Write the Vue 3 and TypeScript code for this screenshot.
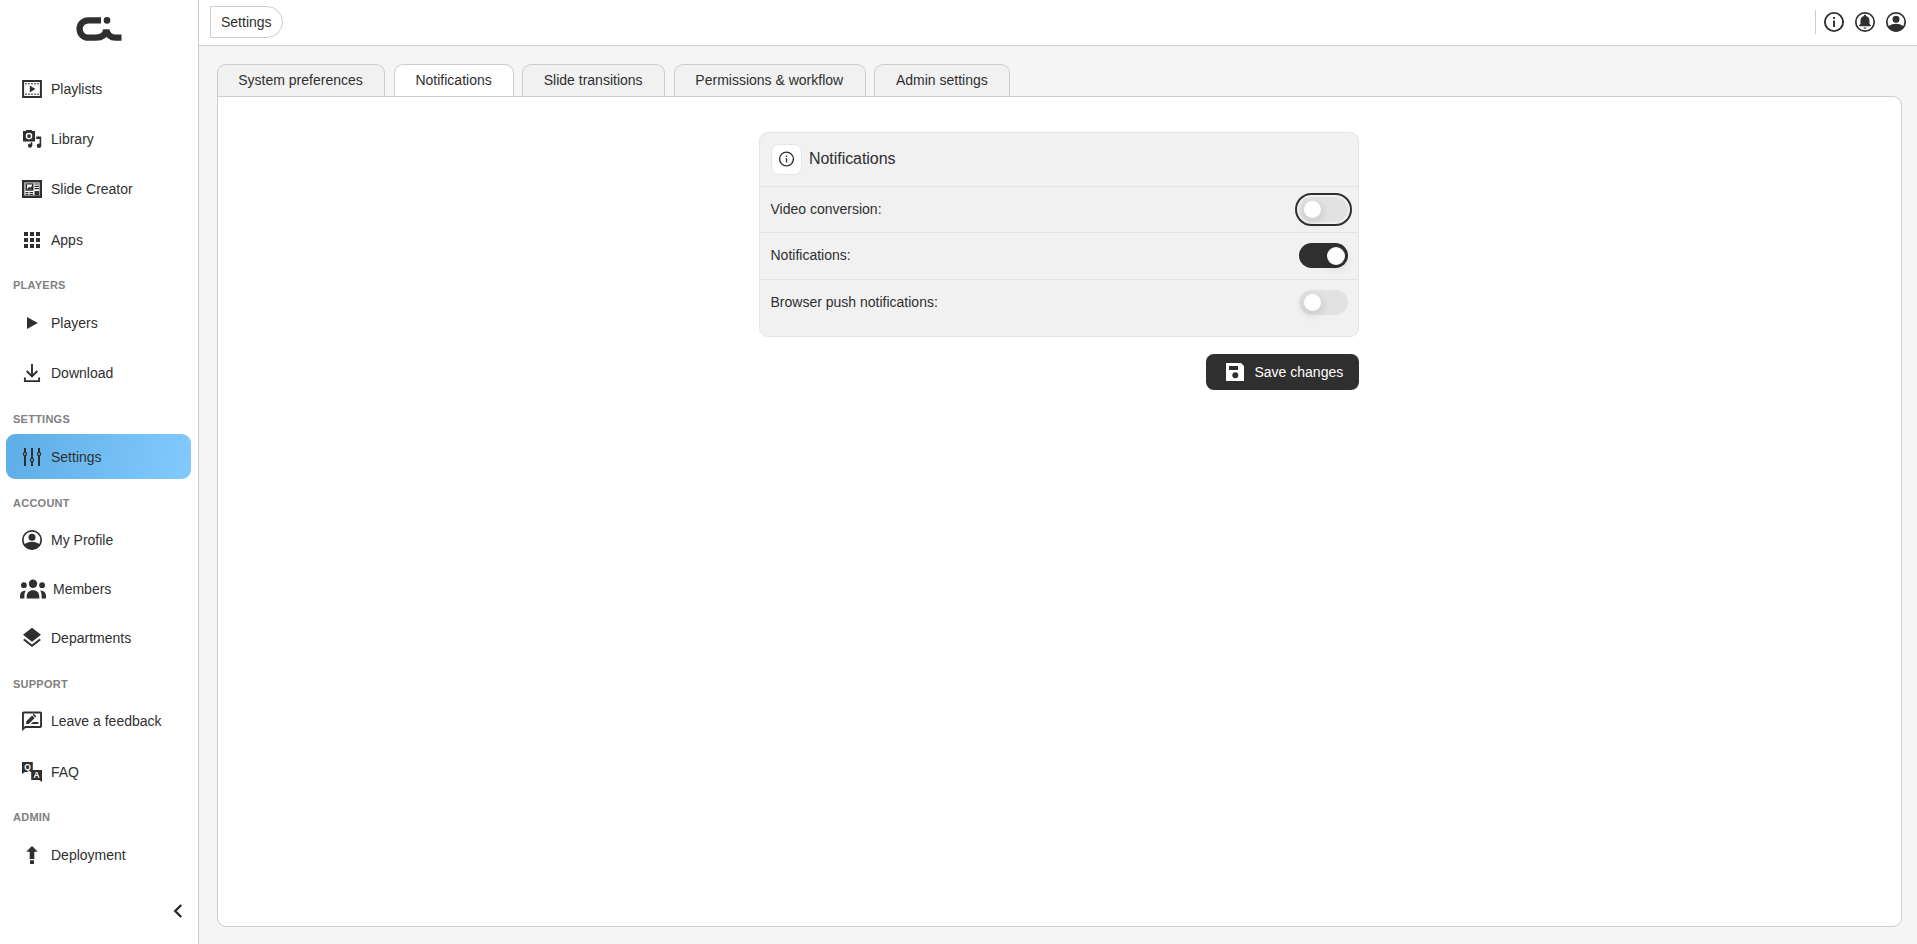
<script setup lang="ts">
import { ref } from 'vue'

interface NavItem { label: string; icon: string }
interface NavGroup { title: string; key: string; items: NavItem[] }

const groups: NavGroup[] = [
  {
    title: '', key: 'media', items: [
      { label: 'Playlists', icon: 'playlist' },
      { label: 'Library', icon: 'library' },
      { label: 'Slide Creator', icon: 'slide' },
      { label: 'Apps', icon: 'apps' },
    ],
  },
  {
    title: 'PLAYERS', key: 'players', items: [
      { label: 'Players', icon: 'play' },
      { label: 'Download', icon: 'download' },
    ],
  },
  { title: 'SETTINGS', key: 'settings', items: [{ label: 'Settings', icon: 'sliders' }] },
  {
    title: 'ACCOUNT', key: 'account', items: [
      { label: 'My Profile', icon: 'profile' },
      { label: 'Members', icon: 'members' },
      { label: 'Departments', icon: 'layers' },
    ],
  },
  {
    title: 'SUPPORT', key: 'support', items: [
      { label: 'Leave a feedback', icon: 'feedback' },
      { label: 'FAQ', icon: 'faq' },
    ],
  },
  { title: 'ADMIN', key: 'admin', items: [{ label: 'Deployment', icon: 'deploy' }] },
]

const tabs = ['System preferences', 'Notifications', 'Slide transitions', 'Permissions & workflow', 'Admin settings']
const activeTab = ref('Notifications')
const activeNav = ref('Settings')

const options = ref([
  { label: 'Video conversion:', on: false, focused: true },
  { label: 'Notifications:', on: true, focused: false },
  { label: 'Browser push notifications:', on: false, focused: false },
])
</script>

<template>
  <div class="app">
    <aside class="sidebar">
      <div class="brand">
        <svg width="46" height="26" viewBox="0 0 46 26">
          <path d="M25 4.300H12.300a8.700 8.700 0 0 0 0 17.400H20c5.600 0 9.200-2.500 10.300-7.700 1.400 5 4.300 7.700 9.200 7.700H45.500" fill="none" stroke="#2f2f2f" stroke-width="6.300" />
          <circle cx="31" cy="4.400" r="3.300" fill="#2f2f2f" />
        </svg>
      </div>
      <nav>
        <section v-for="g in groups" :key="g.key" :class="['group', g.key]">
          <h2 v-if="g.title">{{ g.title }}</h2>
          <a v-for="item in g.items" :key="item.label" :class="['item', { active: item.label === activeNav }]" @click="activeNav = item.label">
            <svg v-if="item.icon === 'playlist'" class="ic" viewBox="0 0 24 24">
              <path d="M3.100 4.100h17.800v15.800H3.100z" fill="none" stroke="currentColor" stroke-width="2" />
              <path d="M5 6.800h14M5 17.200h14" stroke="currentColor" stroke-width="1" stroke-dasharray="2 1" />
              <path d="M9.800 8.400v7.200l5.600-3.600z" />
            </svg>
            <svg v-else-if="item.icon === 'library'" class="ic" viewBox="0 0 24 24">
              <path fill-rule="evenodd" d="M3 4h2.500l1-1h5l1 1H15v10.500H3zM9 5.800a3.300 3.300 0 1 0 0 6.600 3.300 3.300 0 0 0 0-6.600z" />
              <circle cx="9" cy="9.100" r="1.900" />
              <path d="M16.200 9.500h5V19h-1.600v-7h-3.400z" />
              <circle cx="19" cy="18.700" r="2.300" /><circle cx="10" cy="18.700" r="2.100" />
              <path d="M10.800 15.200h1.500v3.600h-1.500z" />
            </svg>
            <svg v-else-if="item.icon === 'slide'" class="ic" viewBox="0 0 24 24">
              <path d="M3.200 4.200h17.600v15.600H3.200z" fill="none" stroke="currentColor" stroke-width="2.400" />
              <path fill-rule="evenodd" d="M5.500 6.200h8v7.500h-8zM7 7.500v4.700h5V7.500z" />
              <path d="M7 12.200l2-2.500 1.300 1.100L12 8.700v3.500z" />
              <path d="M14.500 7h4.500M14.500 9.300h4.500M14.500 11.600h4.500" stroke="currentColor" stroke-width="1.200" />
              <path d="M5.500 15h3v1.300h-3zM9.500 15H13v1.300H9.500zM5.500 17h3v1h-3zM9.500 17H13v1H9.500zM14.500 14H19v4.500h-4.500z" />
            </svg>
            <svg v-else-if="item.icon === 'apps'" class="ic" viewBox="0 0 24 24">
              <path d="M4 4h4v4H4zM10 4h4v4h-4zM16 4h4v4h-4zM4 10h4v4H4zM10 10h4v4h-4zM16 10h4v4h-4zM4 16h4v4H4zM10 16h4v4h-4zM16 16h4v4h-4z" />
            </svg>
            <svg v-else-if="item.icon === 'play'" class="ic" viewBox="0 0 24 24"><path d="M7 6v12l10.800-6z" /></svg>
            <svg v-else-if="item.icon === 'download'" class="ic" viewBox="0 0 24 24">
              <path d="M12 3v12M6.700 10l5.300 5.300 5.300-5.300M4.900 16.500v3.600h14.200v-3.600" fill="none" stroke="currentColor" stroke-width="1.900" />
            </svg>
            <svg v-else-if="item.icon === 'sliders'" class="ic" viewBox="0 0 24 24">
              <path d="M5 3v4M5 11v10M12 3v10M12 17v4M19 3v4M19 11v10" stroke="currentColor" stroke-width="2" />
              <g fill="none" stroke="currentColor" stroke-width="1.200"><circle cx="5" cy="9" r="1.600" /><circle cx="12" cy="15" r="1.600" /><circle cx="19" cy="9" r="1.600" /></g>
            </svg>
            <svg v-else-if="item.icon === 'profile'" class="ic" viewBox="0 0 24 24">
              <circle cx="12" cy="12" r="9.200" fill="none" stroke="currentColor" stroke-width="1.700" />
              <circle cx="12" cy="9.200" r="3.500" />
              <path d="M4 17c2-2.300 5-3.200 8-3.200s6 .9 8 3.200c-2 3-5 4.600-8 4.600S6 20 4 17z" />
            </svg>
            <svg v-else-if="item.icon === 'members'" class="ic wide" viewBox="0 0 28 24">
              <circle cx="14" cy="6.800" r="4.200" /><circle cx="4.900" cy="8.200" r="2.900" /><circle cx="23.100" cy="8.200" r="2.900" />
              <path d="M7.700 21.500v-1.800c0-4.200 2.500-6.400 6.300-6.400s6.300 2.200 6.300 6.400v1.800zM1 21.500v-2.700c0-3.400 1.900-5.200 5.800-5.400-1 1.500-1.400 3.200-1.400 5.400v2.700zM27 21.500v-2.700c0-3.400-1.900-5.200-5.800-5.400 1 1.500 1.400 3.200 1.400 5.400v2.700z" />
            </svg>
            <svg v-else-if="item.icon === 'layers'" class="ic" viewBox="0 0 24 24">
              <path d="M12 1.800l9 7-9 7-9-7zM12 18.400l7.400-5.700L21 14l-9 7-9-7 1.600-1.300z" />
            </svg>
            <svg v-else-if="item.icon === 'feedback'" class="ic" viewBox="0 0 24 24">
              <path fill-rule="evenodd" d="M2 4.300Q2 2.500 3.800 2.500h16.400Q22 2.500 22 4.300v12.900q0 1.800-1.800 1.800H5.600L2 22zM3.900 4.400v13.500l1.200-.8h15V4.400z" />
              <path d="M6.200 15v-2.600l5.900-6 2.600 2.600-6 6zM12.700 5.800l1.100-1.100 2.600 2.500-1.100 1.200zM11 15l2-2h5.300v2z" />
            </svg>
            <svg v-else-if="item.icon === 'faq'" class="ic" viewBox="0 0 24 24">
              <path d="M2 2h10.800v10H5l-3 2zM11.200 10H22v12l-2.800-2h-8z" />
              <text x="7.500" y="9.800" class="qa">Q</text><text x="16.600" y="18.400" class="qa">A</text>
            </svg>
            <svg v-else class="ic" viewBox="0 0 24 24"><path d="M12 3l5.800 5.800h-3.500V16H9.700V8.800H6.200zM10 17.200h4v3.800h-4z" /></svg>
            <span>{{ item.label }}</span>
          </a>
        </section>
      </nav>
      <button class="collapse" aria-label="Collapse">
        <svg width="10" height="14" viewBox="0 0 10 14"><path d="M8.200 1L2.200 7l6 6" fill="none" stroke="#222" stroke-width="2.200" /></svg>
      </button>
    </aside>

    <div class="main">
      <header class="topbar">
        <div class="crumb">Settings</div>
        <div class="actions">
          <svg class="hic" viewBox="0 0 22 22">
            <circle cx="11" cy="11" r="9.100" fill="none" stroke="currentColor" stroke-width="1.900" />
            <path d="M10.100 6h1.900v1.900h-1.900zM10.100 9.400h1.900V16h-1.900z" />
          </svg>
          <svg class="hic" viewBox="0 0 22 22">
            <circle cx="11" cy="11" r="9.200" fill="none" stroke="currentColor" stroke-width="1.700" />
            <path d="M11 3.700c.8 0 1.200.5 1.200 1.200 2.200.6 3.300 2.300 3.300 4.600v3.200l1.300 1.500v1H5.200v-1l1.300-1.500V9.500c0-2.300 1.100-4 3.300-4.600 0-.7.4-1.200 1.200-1.200zM9.500 16.500h3q-.3 1.300-1.500 1.300t-1.500-1.300z" />
          </svg>
          <svg class="hic" viewBox="0 0 22 22">
            <circle cx="11" cy="11" r="9.200" fill="none" stroke="currentColor" stroke-width="1.700" />
            <circle cx="11" cy="8.200" r="3.500" />
            <path d="M3 16c2-2.300 5-3.200 8-3.200s6 .9 8 3.200c-2 3-5 4.600-8 4.600S5 19 3 16z" />
          </svg>
        </div>
      </header>

      <div class="workspace">
        <div class="tabs">
          <button v-for="t in tabs" :key="t" :class="['tab', { active: t === activeTab }]" @click="activeTab = t">{{ t }}</button>
        </div>
        <div class="panel">
          <div class="column">
            <div class="card">
              <div class="card-head">
                <span class="badge">
                  <svg width="16" height="16" viewBox="0 0 16 16">
                    <circle cx="8" cy="8" r="6.900" fill="none" stroke="#2f2f2f" stroke-width="1.400" />
                    <path d="M7.350 4.500h1.300v1.400h-1.300zM7.350 7.100h1.300v4.300h-1.300z" fill="#2f2f2f" />
                  </svg>
                </span>
                <span class="card-title">Notifications</span>
              </div>
              <div v-for="o in options" :key="o.label" class="row">
                <span>{{ o.label }}</span>
                <button role="switch" :aria-checked="o.on" :class="['switch', { on: o.on, focused: o.focused }]" @click="o.on = !o.on"><i></i></button>
              </div>
            </div>
            <button class="save">
              <svg width="18" height="18" viewBox="0 0 18 18">
                <path fill="#fff" fill-rule="evenodd" d="M0 0h15l3 3v15H0zM3 3v4h9V3zM9.300 9.300a3 3 0 1 0 0 6 3 3 0 0 0 0-6z" />
              </svg>
              Save changes
            </button>
          </div>
        </div>
      </div>
    </div>
  </div>
</template>

<style>
html, body { height: 100%; overflow: hidden; }
</style>

<style scoped>
* { box-sizing: border-box; }
.app {
  display: flex;
  height: 944px;
  font-family: "Liberation Sans", Arial, sans-serif;
  font-size: 14px;
  color: #2f2f2f;
  background: #f5f5f5;
}
button { font: inherit; color: inherit; border: 0; padding: 0; cursor: pointer; }
.sidebar {
  width: 199px;
  flex: none;
  display: flex;
  flex-direction: column;
  background: #fff;
  border-right: 1px solid #ccc;
}
.brand { height: 63.600px; flex: none; padding: 16px 0 0 75.500px; }
.brand svg { display: block; }
.group { --pitch: 50.300px; }
.group.account { --pitch: 49px; }
.group.support { padding-top: .8px; }
h2 {
  margin: 0;
  height: 33px;
  padding: 12.500px 0 0 13px;
  font-size: 11px;
  line-height: 16px;
  font-weight: 700;
  letter-spacing: .25px;
  color: #808080;
}
.item {
  height: var(--pitch);
  display: flex;
  align-items: center;
  gap: 7px;
  margin: 0 7px 0 6px;
  padding-left: 14px;
  border-radius: 9px;
  white-space: nowrap;
}
.item.active {
  height: 45px;
  margin-top: 3px;
  margin-bottom: 3px;
  background: linear-gradient(100deg, #5dade6, #81caff);
}
.ic { width: 24px; height: 24px; flex: none; fill: currentColor; }
.ic.wide { width: 28px; margin: 0 -1px 0 -1px; }
.qa { font: 700 8.500px "Liberation Sans", Arial, sans-serif; fill: #fff; text-anchor: middle; }
.collapse { margin: auto 15px 26px auto; background: none; display: flex; }
.main { flex: 1; min-width: 0; display: flex; flex-direction: column; }
.topbar {
  height: 46px;
  flex: none;
  display: flex;
  align-items: flex-start;
  justify-content: space-between;
  padding: 6px 10px 0 11px;
  background: #fff;
  border-bottom: 1px solid #ccc;
}
.crumb {
  height: 32px;
  line-height: 31px;
  width: 73px;
  padding-left: 10px;
  border: 1px solid #ccc;
  border-radius: 0 16px 16px 0;
}
.actions {
  display: flex;
  align-items: center;
  gap: 9px;
  height: 24px;
  margin-top: 4px;
  padding-left: 7.500px;
  border-left: 1px solid #ccc;
}
.hic { width: 22px; height: 22px; fill: currentColor; }
.workspace { flex: 1; display: flex; flex-direction: column; padding: 18px 15px 17px 18px; }
.tabs {
  display: grid;
  grid-template-columns: 168px 120px 143px 192px 136px;
  gap: 8.600px;
  height: 32px;
}
.tab {
  padding: 0 1px 1px 0;
  line-height: 31px;
  text-align: center;
  white-space: nowrap;
  background: #f1f1f1;
  border: 1px solid #ccc;
  border-bottom: 0;
  border-radius: 9px 9px 0 0;
}
.tab.active { padding-right: 0; background: #fff; }
.panel {
  flex: 1;
  display: flex;
  justify-content: center;
  align-items: flex-start;
  padding: 35px 1px 0 0;
  background: #fff;
  border: 1px solid #ccc;
  border-radius: 0 9px 9px 9px;
}
.column { width: 600px; display: flex; flex-direction: column; align-items: flex-end; gap: 17px; }
.card {
  width: 600px;
  height: 205px;
  background: #f1f1f1;
  border: 1px solid #e3e3e3;
  border-radius: 9px;
}
.card-head { height: 53px; display: flex; align-items: flex-start; padding: 11px 0 0 11px; gap: 7px; }
.badge {
  width: 31px;
  height: 31px;
  display: grid;
  place-items: center;
  background: #fff;
  border: 1px solid #e6e6e6;
  border-radius: 8px;
}
.badge svg { display: block; transform: translate(-.5px, -1px); }
.card-title { font-size: 16px; line-height: 29px; letter-spacing: -.05px; }
.row {
  height: 46.500px;
  display: flex;
  align-items: center;
  justify-content: space-between;
  padding: 0 10px 0 10.500px;
  border-top: 1px solid #e2e2e2;
}
.row > span { padding-bottom: 1px; }
.row:nth-child(2) { height: 46px; }
.switch {
  width: 49px;
  height: 25px;
  padding: 0 5px;
  display: flex;
  align-items: center;
  border-radius: 13px;
  background: #e2e2e2;
}
.switch i { width: 17px; height: 17px; border-radius: 50%; background: #fff; box-shadow: 0 3px 9px 2px rgba(0, 0, 0, .1); }
.switch.on { background: #2f2f2f; justify-content: flex-end; padding-right: 3.500px; }
.switch.on i { width: 18px; height: 18px; }
.switch.focused { outline: 2px solid #2f2f2f; outline-offset: 2px; }
.save {
  width: 153px;
  height: 36px;
  display: flex;
  align-items: center;
  gap: 11px;
  padding-left: 19.500px;
  color: #fff;
  background: #2f2f2f;
  border-radius: 8px;
}
</style>
